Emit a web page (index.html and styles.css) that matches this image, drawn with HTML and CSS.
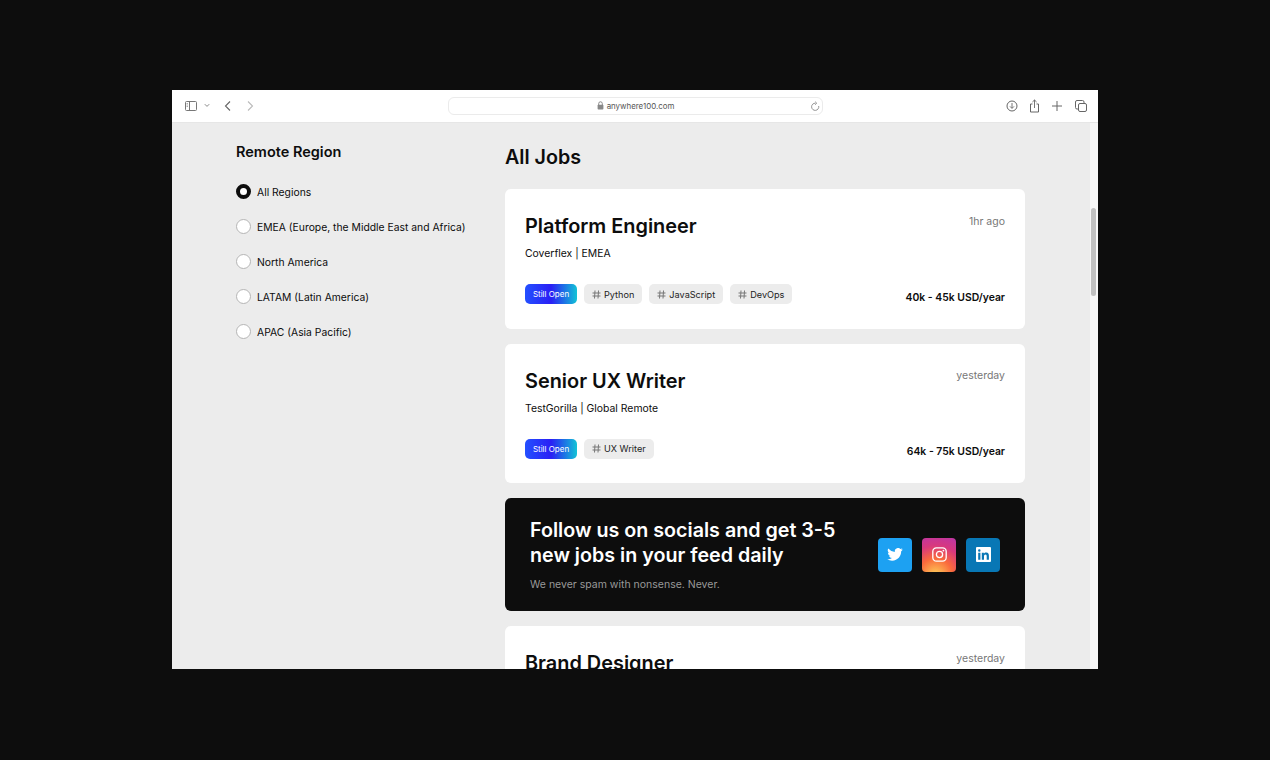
FILE: index.html
```html
<!DOCTYPE html>
<html lang="en">
<head>
<meta charset="utf-8">
<title>Anywhere100</title>
<link rel="stylesheet" href="styles.css">
</head>
<body>
<div class="window">
  <header class="toolbar">
    <div class="tb-left">
      <svg class="ic" width="14" height="12" viewBox="0 0 14 12"><rect x="1.500" y="1.500" width="11" height="9" rx="1" fill="none" stroke="#777" stroke-width="1"/><path d="M5.500 1.500v9" stroke="#777"/><path d="M2.500 3.500h1.500M2.500 5h1.500M2.500 6.500h1.500" stroke="#999" stroke-width=".8"/></svg>
      <svg class="chev" width="6" height="5" viewBox="0 0 6 5"><path d="M.8 1.200 3 3.400l2.200-2.200" fill="none" stroke="#888"/></svg>
      <svg class="back" width="8" height="12" viewBox="0 0 8 12"><path d="M6 1.500 1.500 6 6 10.500" fill="none" stroke="#666" stroke-width="1.100"/></svg>
      <svg class="fwd" width="8" height="12" viewBox="0 0 8 12"><path d="M2 1.500 6.500 6 2 10.500" fill="none" stroke="#bbb" stroke-width="1.100"/></svg>
    </div>
    <div class="url">
      <svg class="lock" width="7" height="9" viewBox="0 0 7 9"><path d="M1.700 4V2.600a1.800 1.800 0 0 1 3.600 0V4" fill="none" stroke="#888"/><rect x=".6" y="3.800" width="5.800" height="4.700" rx=".8" fill="#888"/></svg>
      <span>anywhere100.com</span>
      <svg class="reload" width="10" height="11" viewBox="0 0 10 11"><path d="M5.500 2.200A3.600 3.600 0 1 0 8.700 5" fill="none" stroke="#888" stroke-width=".9"/><path d="M5 .6 6.800 2.200 5 3.800" fill="none" stroke="#888" stroke-width=".8"/></svg>
    </div>
    <div class="tb-right">
      <svg class="tb-download" width="12" height="12" viewBox="0 0 12 12"><circle cx="6" cy="6" r="5" fill="none" stroke="#666"/><path d="M6 3v5.200M4 6.400l2 2 2-2" fill="none" stroke="#666" stroke-width=".9"/></svg>
      <svg width="11" height="14" viewBox="0 0 11 14"><path d="M3.500 5H1.500v8h8V5H7.500" fill="none" stroke="#666"/><path d="M5.500 9V1M3.400 3 5.500 1l2.100 2" fill="none" stroke="#666" stroke-width=".9"/></svg>
      <svg class="tb-plus" width="10" height="10" viewBox="0 0 10 10"><path d="M5 0v10M0 5h10" stroke="#666"/></svg>
      <svg width="12" height="12" viewBox="0 0 12 12"><rect x="3.500" y="3.500" width="8" height="8" rx="1.500" fill="#fff" stroke="#666"/><path d="M3.500 9H2a1.500 1.500 0 0 1-1.500-1.500V2A1.500 1.500 0 0 1 2 .5h5.500A1.500 1.500 0 0 1 9 2v1.500" fill="none" stroke="#666"/></svg>
    </div>
  </header>
  <div class="viewport">
    <div class="page">
      <aside class="sidebar">
        <h2 class="side-title">Remote Region</h2>
        <ul class="regions">
          <li class="region"><span class="radio radio-on"></span>All Regions</li>
          <li class="region"><span class="radio"></span>EMEA (Europe, the Middle East and Africa)</li>
          <li class="region"><span class="radio"></span>North America</li>
          <li class="region"><span class="radio"></span>LATAM (Latin America)</li>
          <li class="region"><span class="radio"></span>APAC (Asia Pacific)</li>
        </ul>
      </aside>
      <main class="jobs">
        <h1 class="jobs-title">All Jobs</h1>
        <article class="card">
          <div class="card-top">
            <h3 class="job-title">Platform Engineer</h3>
            <span class="age">1hr ago</span>
          </div>
          <p class="company">Coverflex | EMEA</p>
          <div class="card-bottom">
            <div class="tags">
              <span class="open">Still Open</span>
              <span class="tag"><svg class="hash" width="9" height="9" viewBox="0 0 9 9"><path d="M3 .5 2.500 8.500M6.500 .5 6 8.500M.5 3h8M.5 6h8" fill="none" stroke="#777"/></svg>Python</span>
              <span class="tag"><svg class="hash" width="9" height="9" viewBox="0 0 9 9"><path d="M3 .5 2.500 8.500M6.500 .5 6 8.500M.5 3h8M.5 6h8" fill="none" stroke="#777"/></svg>JavaScript</span>
              <span class="tag"><svg class="hash" width="9" height="9" viewBox="0 0 9 9"><path d="M3 .5 2.500 8.500M6.500 .5 6 8.500M.5 3h8M.5 6h8" fill="none" stroke="#777"/></svg>DevOps</span>
            </div>
            <span class="salary">40k - 45k USD/year</span>
          </div>
        </article>
        <article class="card">
          <div class="card-top">
            <h3 class="job-title">Senior UX Writer</h3>
            <span class="age">yesterday</span>
          </div>
          <p class="company">TestGorilla | Global Remote</p>
          <div class="card-bottom">
            <div class="tags">
              <span class="open">Still Open</span>
              <span class="tag"><svg class="hash" width="9" height="9" viewBox="0 0 9 9"><path d="M3 .5 2.500 8.500M6.500 .5 6 8.500M.5 3h8M.5 6h8" fill="none" stroke="#777"/></svg>UX Writer</span>
            </div>
            <span class="salary">64k - 75k USD/year</span>
          </div>
        </article>
        <section class="promo">
          <div class="promo-text">
            <h3 class="promo-title">Follow us on socials and get 3-5 new jobs in your feed daily</h3>
            <p class="promo-sub">We never spam with nonsense. Never.</p>
          </div>
          <div class="socials">
            <span class="soc soc-tw"><svg width="16" height="13" viewBox="0 0 24 20"><path fill="#fff" d="M24 2.400a9.800 9.800 0 0 1-2.800.8A4.900 4.900 0 0 0 23.300.500a9.800 9.800 0 0 1-3.100 1.200 4.900 4.900 0 0 0-8.400 4.500A14 14 0 0 1 1.700.9a4.900 4.900 0 0 0 1.500 6.600A4.900 4.900 0 0 1 1 6.900v.1a4.900 4.900 0 0 0 3.900 4.800 4.900 4.900 0 0 1-2.200.1 4.900 4.900 0 0 0 4.600 3.400A9.900 9.900 0 0 1 0 17.300 14 14 0 0 0 7.500 19.500c9.100 0 14-7.500 14-14v-.6A10 10 0 0 0 24 2.400z"/></svg></span>
            <span class="soc soc-ig"><svg width="15" height="15" viewBox="0 0 15 15"><rect x=".8" y=".8" width="13.400" height="13.400" rx="3.600" fill="none" stroke="#fff" stroke-width="1.300"/><circle cx="7.500" cy="7.500" r="3.100" fill="none" stroke="#fff" stroke-width="1.300"/><circle cx="11.400" cy="3.600" r=".9" fill="#fff"/></svg></span>
            <span class="soc soc-li"><svg width="15" height="15" viewBox="0 0 15 15"><rect width="15" height="15" rx="1" fill="#fff"/><path fill="#0877b5" d="M2.200 5.700h2.200v7H2.200zM3.300 2.200a1.250 1.250 0 1 1 0 2.500 1.250 1.250 0 0 1 0-2.500zM5.800 5.700h2.100v1c.4-.7 1.200-1.200 2.300-1.200 2.200 0 2.700 1.400 2.700 3.300v3.900h-2.200V9.200c0-.9-.1-1.800-1.200-1.800S8 8.300 8 9.200v3.500H5.800z"/></svg></span>
          </div>
        </section>
        <article class="card">
          <div class="card-top">
            <h3 class="job-title">Brand Designer</h3>
            <span class="age">yesterday</span>
          </div>
        </article>
      </main>
    </div>
    <div class="scrolltrack"><div class="thumb"></div></div>
  </div>
</div>
</body>
</html>
```
FILE: styles.css
```css
* { box-sizing: border-box; }
html, body { height: 100%; }
body {
  margin: 0;
  background: #0d0d0d;
  padding: 90px 172px 91px;
  overflow: hidden;
  font-family: Inter, "Liberation Sans", sans-serif;
  color: #0d0d0d;
}
.window {
  width: 926px;
  height: 579px;
  background: #fff;
  display: flex;
  flex-direction: column;
  overflow: hidden;
}
.toolbar {
  height: 33px;
  flex: none;
  display: flex;
  align-items: center;
  justify-content: space-between;
  padding: 0 11px 1px 12px;
  background: #fff;
  border-bottom: 1px solid #e6e6e6;
}
.tb-left { display: flex; align-items: center; width: 264px; }
.chev { margin-left: 6px; }
.back { margin-left: 14px; }
.fwd { margin-left: 14px; }
.url {
  width: 375px;
  height: 18px;
  border: 1px solid #ebebeb;
  border-radius: 6px;
  display: flex;
  align-items: center;
  justify-content: center;
  gap: 3px;
  font-size: 7.900px;
  color: #555;
  position: relative;
}
.reload { position: absolute; right: 2px; top: 3px; }
.tb-right { display: flex; align-items: center; justify-content: flex-end; gap: 12px; width: 264px; }
.tb-download { margin-right: -1px; }
.tb-plus { margin-right: 1px; }
.viewport { flex: 1; min-height: 0; display: flex; overflow: hidden; }
.page {
  flex: 1;
  background: #ececec;
  display: flex;
  padding: 20px 0 0 64px;
  height: 100%;
  overflow: hidden;
}
.scrolltrack { width: 8px; background: #f7f7f7; padding: 85px 1px 0 1px; }
.thumb { height: 88px; width: 5px; background: #c0c0c0; border-radius: 3px; }
.sidebar { width: 269px; flex: none; }
.side-title { margin: 0; font-size: 14.500px; line-height: 18px; font-weight: 600; }
.regions { list-style: none; margin: 23px 0 0; padding: 0; display: flex; flex-direction: column; gap: 20px; }
.region { display: flex; align-items: center; gap: 6px; font-size: 10.350px; height: 15px; white-space: nowrap; }
.radio { width: 15px; height: 15px; border-radius: 50%; background: #fff; border: 1px solid #b5b5b5; flex: none; }
.radio-on { border: 4px solid #0d0d0d; }
.jobs { width: 520px; flex: none; }
.jobs-title { margin: 2px 0 20px; font-size: 19.700px; line-height: 24px; font-weight: 600; }
.card {
  background: #fff;
  border-radius: 6px;
  height: 139.500px;
  padding: 24px 20px 0;
  margin-bottom: 15px;
}
.card-top { display: flex; justify-content: space-between; align-items: flex-start; }
.job-title { margin: 1px 0 0; font-size: 19.900px; line-height: 25px; font-weight: 600; }
.age { font-size: 10.500px; line-height: 16px; color: #777; margin-top: .5px; }
.company { margin: 7px 0 0; font-size: 10.400px; line-height: 16px; }
.card-bottom { margin-top: 22px; display: flex; justify-content: space-between; align-items: center; }
.tags { display: flex; gap: 7px; }
.open {
  height: 20px;
  width: 52px;
  border-radius: 5px;
  display: flex;
  align-items: center;
  justify-content: center;
  font-size: 8px;
  color: #fff;
  background: linear-gradient(90deg, #2450ff 0%, #2a1ff5 50%, #12c3d6 100%);
}
.tag {
  height: 20px;
  padding: 0 8px;
  border-radius: 5px;
  background: #ececec;
  display: flex;
  align-items: center;
  gap: 3px;
  font-size: 9.150px;
  color: #222;
}
.hash { flex: none; }
.salary { font-size: 10.400px; font-weight: 600; padding-top: 6px; }
.promo {
  background: #0d0d0d;
  border-radius: 6px;
  height: 113px;
  margin-bottom: 15px;
  padding: 0 25px;
  display: flex;
  align-items: center;
  justify-content: space-between;
}
.promo-title { margin: 1px 0 0; width: 320px; font-size: 19.700px; line-height: 25px; font-weight: 600; color: #fff; }
.promo-sub { margin: 9px 0 0; font-size: 10.500px; line-height: 16px; color: #999; }
.socials { display: flex; gap: 10px; }
.soc { width: 34px; height: 34px; border-radius: 4px; display: flex; align-items: center; justify-content: center; }
.soc-tw { background: #1da1f2; }
.soc-ig { background: radial-gradient(circle at 40% 110%, #fdd25a 0%, #fa6a3c 40%, #d8387e 70%, #bb36a8 100%); }
.soc-li { background: #0877b5; }
```
